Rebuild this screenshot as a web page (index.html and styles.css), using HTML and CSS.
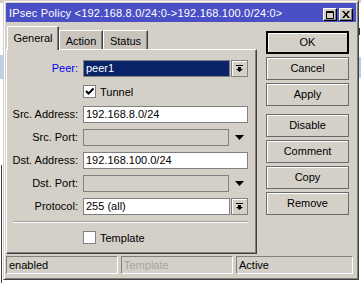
FILE: index.html
```html
<!DOCTYPE html>
<html lang="en">
<head>
  <meta charset="UTF-8" />
  <title>IPsec Policy</title>
  <link rel="stylesheet" href="styles.css">
</head>
<body>
  <div class="edge edge-left">
    <span class="seg gray"></span>
    <span class="seg white" style="height: 52px"></span>
    <span class="seg blue" style="height: 24px"></span>
    <span class="seg white" style="height: 86px"></span>
    <span class="seg line"></span>
  </div>

  <div class="window">
    <div class="titlebar">
      <span class="title">IPsec Policy &lt;192.168.8.0/24:0-&gt;192.168.100.0/24:0&gt;</span>
      <span class="tbtn">
        <svg width="8" height="8" viewBox="0 0 8 8"><path d="M0.5 0.5h7v7h-7z M0.5 1.5h7" fill="none" stroke="#000" stroke-width="1"/></svg>
      </span>
      <span class="tbtn">
        <svg width="8" height="7" viewBox="0 0 8 7"><path d="M0 0h2l2 2.5 2-2.5h2l-3 3.5 3 3.5h-2l-2-2.5-2 2.5h-2l3-3.5z" fill="#000"/></svg>
      </span>
    </div>

    <div class="main">
      <div class="tabbox">
        <div class="tabs">
          <div class="tab active">General</div>
          <div class="tab">Action</div>
          <div class="tab">Status</div>
        </div>
        <div class="panel">
          <div class="form">
            <div class="lbl link">Peer:</div>
            <div class="combo">
              <div class="field selected">peer1</div>
              <span class="drop">
                <svg width="7" height="7" viewBox="0 0 7 7"><path d="M0 0h7v1h-7z M2 2h3v2h2l-3.5 3-3.5-3h2z" fill="#000"/></svg>
              </span>
            </div>

            <div></div>
            <div class="check">
              <span class="box">
                <svg width="9" height="9" viewBox="0 0 9 9"><path d="M1 4l2.5 2.5 5-5" fill="none" stroke="#000" stroke-width="2"/></svg>
              </span>
              Tunnel
            </div>

            <div class="lbl">Src. Address:</div>
            <div class="field">192.168.8.0/24</div>

            <div class="lbl">Src. Port:</div>
            <div class="combo">
              <div class="field disabled"></div>
              <span class="arrow">
                <svg width="9" height="5" viewBox="0 0 9 5"><path d="M0 0h9l-4.5 5z" fill="#000"/></svg>
              </span>
            </div>

            <div class="lbl">Dst. Address:</div>
            <div class="field">192.168.100.0/24</div>

            <div class="lbl">Dst. Port:</div>
            <div class="combo">
              <div class="field disabled"></div>
              <span class="arrow">
                <svg width="9" height="5" viewBox="0 0 9 5"><path d="M0 0h9l-4.5 5z" fill="#000"/></svg>
              </span>
            </div>

            <div class="lbl">Protocol:</div>
            <div class="combo">
              <div class="field">255 (all)</div>
              <span class="drop">
                <svg width="7" height="7" viewBox="0 0 7 7"><path d="M0 0h7v1h-7z M2 2h3v2h2l-3.5 3-3.5-3h2z" fill="#000"/></svg>
              </span>
            </div>

            <div class="separator"></div>

            <div></div>
            <div class="check">
              <span class="box"></span>
              Template
            </div>
          </div>
        </div>
      </div>

      <div class="buttons">
        <div class="btn default">OK</div>
        <div class="btn">Cancel</div>
        <div class="btn">Apply</div>
        <div class="btn spaced">Disable</div>
        <div class="btn">Comment</div>
        <div class="btn">Copy</div>
        <div class="btn">Remove</div>
      </div>
    </div>

    <div class="statusbar">
      <div class="cell">enabled</div>
      <div class="cell dim">Template</div>
      <div class="cell">Active</div>
    </div>
  </div>

  <div class="edge edge-right">
    <span class="seg gray"></span>
    <span class="seg white" style="height: 25px"></span>
    <span class="seg dark" style="height: 7px"></span>
    <span class="seg white" style="height: 22px"></span>
    <span class="seg blue" style="height: 21px"></span>
    <span class="seg white"></span>
  </div>
</body>
</html>
```

FILE: styles.css
```css
body {
  margin: 0;
  height: 283px;
  overflow: hidden;
  display: flex;
  background: #fff;
  font-family: "Liberation Sans", Arial, sans-serif;
  font-size: 11px;
  color: #000;
}

/* bits of the windows behind */
.edge {
  display: flex;
  flex-direction: column;
}
.edge-left {
  width: 3px;
  flex: none;
}
.edge-right {
  flex: 1;
}
.seg {
  display: block;
}
.seg.gray {
  height: 3px;
  background: #d4d0c8;
}
.seg.white {
  background: #fff;
}
.seg.blue {
  background: #b9d1ea;
}
.seg.dark {
  background: #303030;
  width: 1px;
}
.seg.line {
  flex: 1;
  border-left: 1px solid #404040;
  margin-left: 1px;
  background: #fff;
}
.edge-right .seg.white:last-child {
  flex: 1;
}

/* window frame */
.window {
  box-sizing: border-box;
  width: 356px;
  height: 280px;
  flex: none;
  display: flex;
  flex-direction: column;
  padding: 2px;
  background: #d4d0c8;
  border: 1px solid;
  border-color: #d4d0c8 #404040 #404040 #d4d0c8;
  box-shadow: inset 1px 1px 0 #fff, inset -1px -1px 0 #808080;
}
.titlebar {
  height: 19px;
  box-sizing: border-box;
  display: flex;
  align-items: flex-end;
  gap: 2px;
  padding: 0 3px 1px 3px;
  background: #4a4fc6;
  color: #fff;
}
.title {
  flex: 1;
  align-self: center;
  white-space: nowrap;
  padding-top: 2px;
  letter-spacing: 0.2px;
}
.tbtn {
  box-sizing: border-box;
  width: 14px;
  height: 13px;
  display: flex;
  align-items: center;
  justify-content: center;
  background: #d4d0c8;
  border: 1px solid;
  border-color: #fff #000 #000 #fff;
  box-shadow: inset -1px -1px 0 #808080;
}

/* tabs + buttons */
.main {
  display: flex;
  gap: 9px;
  height: 228px;
  margin-top: 4px;
}
.tabbox {
  width: 251px;
  display: flex;
  flex-direction: column;
}
.tabs {
  height: 23px;
  display: flex;
  align-items: flex-end;
  padding-left: 1px;
}
.tab {
  box-sizing: border-box;
  height: 19px;
  padding-top: 4px;
  line-height: 13px;
  text-align: center;
  background: #c8c4bc;
  border-top: 1px solid #fff;
  border-left: 1px solid #fff;
  border-right: 1px solid #404040;
  box-shadow: inset -1px 0 0 #808080;
}
.tab:nth-child(1) {
  width: 52px;
}
.tab:nth-child(2) {
  width: 44px;
}
.tab:nth-child(3) {
  width: 45px;
}
.tab.active {
  height: 24px;
  margin-bottom: -1px;
  padding-top: 5px;
  background: #d4d0c8;
  position: relative;
  z-index: 1;
}
.panel {
  flex: 1;
  box-sizing: border-box;
  padding-top: 10px;
  border: 1px solid;
  border-color: #fff #404040 #404040 #fff;
  box-shadow: inset -1px -1px 0 #808080;
}

/* form */
.form {
  display: grid;
  grid-template-columns: 71px 165px;
  column-gap: 5px;
  row-gap: 6px;
}
.lbl {
  height: 17px;
  line-height: 17px;
  text-align: right;
  white-space: nowrap;
}
.lbl.link {
  color: #0000ee;
}
.field {
  box-sizing: border-box;
  height: 17px;
  padding: 0 2px;
  line-height: 15px;
  background: #fff;
  border: 1px solid #808080;
  white-space: nowrap;
}
.field.selected {
  background: #0a246a;
  color: #fff;
}
.field.disabled {
  background: #d4d0c8;
}
.combo {
  display: flex;
  gap: 1px;
}
.combo .field {
  width: 147px;
}
.drop {
  box-sizing: border-box;
  width: 17px;
  height: 17px;
  display: flex;
  align-items: center;
  justify-content: center;
  background: #d4d0c8;
  border: 1px solid #808080;
  box-shadow: inset 1px 1px 0 #fff;
}
.arrow {
  width: 17px;
  height: 17px;
  display: flex;
  align-items: center;
  justify-content: center;
  padding-left: 1px;
}
.check {
  height: 17px;
  display: flex;
  align-items: center;
  gap: 4px;
}
.box {
  box-sizing: border-box;
  width: 13px;
  height: 13px;
  display: flex;
  align-items: center;
  justify-content: center;
  background: #fff;
  border: 1px solid #808080;
}
.separator {
  grid-column: 1 / -1;
  height: 0;
  margin-left: 6px;
  border-top: 1px solid #a0a0a0;
  border-bottom: 1px solid #fff;
}

.buttons {
  width: 83px;
  display: flex;
  flex-direction: column;
  gap: 3px;
  padding-top: 5px;
}
.btn {
  box-sizing: border-box;
  height: 23px;
  line-height: 21px;
  text-align: center;
  background: #d4d0c8;
  border: 1px solid #6a6a6a;
  box-shadow: inset 1px 1px 0 #fff;
}
.btn.default {
  border: 2px solid #000;
  line-height: 19px;
}
.btn.spaced {
  margin-top: 5px;
}

/* status bar */
.statusbar {
  display: grid;
  grid-template-columns: 112px 112px 1fr;
  gap: 3px;
  margin-top: 2px;
  padding-right: 3px;
}
.cell {
  box-sizing: border-box;
  height: 18px;
  padding: 0 2px;
  line-height: 16px;
  border: 1px solid;
  border-color: #808080 #fff #fff #808080;
}
.cell.dim {
  color: #a8a49c;
}
```
